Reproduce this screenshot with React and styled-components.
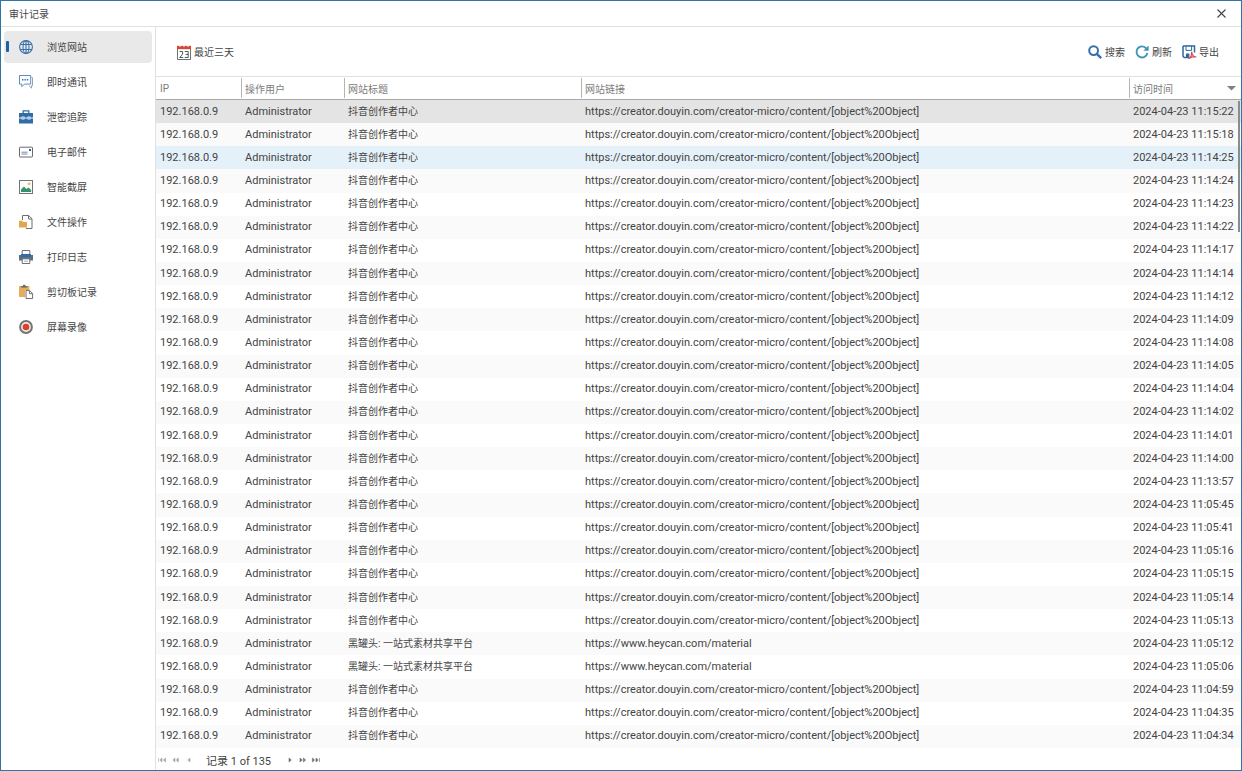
import React, { useState } from 'react';
import styled, { createGlobalStyle } from 'styled-components';

const GlobalStyle = createGlobalStyle`
  * {
    box-sizing: border-box;
  }
  body {
    margin: 0;
    background: #fff;
    color: #444;
    font-family: Roboto, 'Noto Sans CJK SC', sans-serif;
    font-size: 11px;
  }
  button {
    padding: 0;
    border: none;
    background: none;
    color: inherit;
    font: inherit;
    cursor: pointer;
  }
`;

const Window = styled.div`
  display: flex;
  flex-direction: column;
  height: 100vh;
  border: 1px solid #2e75a8;
  overflow: hidden;
`;

const TitleBar = styled.header`
  display: flex;
  align-items: center;
  justify-content: space-between;
  flex: none;
  height: 26px;
  padding: 0 14px 0 8px;
  border-bottom: 1px solid #e1e1e1;
`;

const Title = styled.h1`
  margin: 0;
  font-size: 10px;
  font-weight: 400;
`;

const CloseButton = styled.button`
  display: flex;
`;

const Body = styled.div`
  display: flex;
  flex: 1;
  min-height: 0;
`;

const Sidebar = styled.nav`
  display: flex;
  flex-direction: column;
  gap: 3px;
  flex: none;
  width: 155px;
  padding: 4px 3px;
  border-right: 1px solid #e1e1e1;
`;

const NavItem = styled.button`
  display: flex;
  align-items: center;
  height: 32px;
  padding-bottom: 1px;
  border-radius: 4px;
  background: ${(props) => (props.$active ? '#e9e9e9' : 'transparent')};
  font-size: 10px;

  &::before {
    content: '';
    width: 3px;
    height: 11px;
    margin: 0 9px 0 2px;
    border-radius: 1px;
    background: ${(props) => (props.$active ? '#1b62a5' : 'transparent')};
  }

  svg {
    margin-right: 13px;
  }
`;

const Main = styled.main`
  display: flex;
  flex-direction: column;
  flex: 1;
  min-width: 0;
`;

const Toolbar = styled.div`
  display: flex;
  align-items: center;
  justify-content: space-between;
  flex: none;
  height: 50px;
  padding: 0 22px 0 20px;
  border-bottom: 1px solid #e1e1e1;
`;

const ToolGroup = styled.div`
  display: flex;
  gap: 9px;
`;

const ToolButton = styled.button`
  display: flex;
  align-items: center;
  gap: 2px;
  font-size: 10px;
`;

const GridArea = styled.div`
  position: relative;
  flex: 1;
  min-height: 0;
  overflow: hidden;
`;

const Table = styled.table`
  width: 100%;
  height: 100%;
  table-layout: fixed;
  border-collapse: separate;
  border-spacing: 0;
`;

const HeadCell = styled.th`
  width: ${(props) => props.$width};
  height: 23px;
  padding: 0;
  border-bottom: 1px solid #a8a8a8;
  color: #7c7c7c;
  font-size: 10px;
  font-weight: 400;
  text-align: left;
`;

const HeadInner = styled.div`
  display: flex;
  align-items: center;
  justify-content: space-between;
  height: 20px;
  padding: 0 5px 0 3px;
  border-left: 1px solid ${(props) => (props.$first ? 'transparent' : '#b4b4b4')};
`;

const Row = styled.tr`
  background: ${(props) => (props.$odd ? '#fafafa' : '#fff')};
  ${(props) => props.$hot && 'background: #e5f1f9;'}
  ${(props) => props.$selected && 'background: #e4e4e4;'}
`;

const Cell = styled.td`
  padding: 0 0 0 4px;
  font-size: ${(props) => (props.$small ? '10px' : '11px')};
  line-height: 20px;
  white-space: nowrap;
  overflow: hidden;
`;

const ScrollThumb = styled.div`
  position: absolute;
  top: 24px;
  right: 1px;
  width: 2px;
  height: 131px;
  background: #8c8c8c;
`;

const Pager = styled.footer`
  display: flex;
  align-items: center;
  flex: none;
  height: 22px;
  padding: 2px 1px 0;
`;

const PagerText = styled.span`
  margin: 0 14px 0 13px;
`;

const PagerButtons = styled.div`
  display: flex;
  gap: 3px;
`;

const PagerButton = styled.button`
  display: flex;
`;

const Icon = ({ children, size = 16 }) => (
  <svg width={size} height={size} viewBox="0 0 16 16" fill="none" aria-hidden="true">
    {children}
  </svg>
);

const GlobeIcon = () => (
  <Icon>
    <g stroke="#3a70a8" strokeWidth="1.1">
      <circle cx="8" cy="8" r="6.4" />
      <ellipse cx="8" cy="8" rx="3" ry="6.4" />
      <path d="M8 1.6v12.8M2.4 5.5h11.2M2.4 10.5h11.2" />
    </g>
  </Icon>
);

const ChatIcon = () => (
  <Icon>
    <path d="M13.4 3.5h1.1v8.2h-1v2.4l-2.4-2.2" stroke="#9aa3ad" />
    <path d="M1.5 1.5h11.2v8.6H6.4l-2.6 2.6v-2.6H1.5z" fill="#fff" stroke="#5b8fc4" />
    <path d="M4 5h1.4v1.4H4zM6.4 5h1.4v1.4H6.4zM8.8 5h1.4v1.4H8.8z" fill="#3a70a8" />
  </Icon>
);

const BriefcaseIcon = () => (
  <Icon>
    <path d="M5.2 4V1.8h5.6V4" stroke="#2f6ca8" strokeWidth="1.3" />
    <path d="M1 4h14v10.5H1z" fill="#2f6ca8" />
    <path d="M1 9h14" stroke="#fff" strokeWidth=".9" />
    <path d="M3.5 7.5h3v3h-3zM9.5 7.5h3v3h-3z" fill="#e3edf6" />
    <path d="M4.5 8.5h1v1h-1zM10.5 8.5h1v1h-1z" fill="#2f6ca8" />
  </Icon>
);

const MailIcon = () => (
  <Icon>
    <rect x="1.5" y="3.2" width="13" height="9.8" rx=".6" stroke="#6a6a6a" />
    <path d="M3.5 8.2h6M3.5 10h6" stroke="#6f8fb8" />
    <path d="M11 5h2v2h-2z" fill="#3a5f94" />
  </Icon>
);

const ImageIcon = () => (
  <Icon>
    <rect x="1.5" y="1.5" width="13" height="13" stroke="#737373" />
    <path d="M3 13v-2.4l3-3.2 2.4 2.6 2-1.6 2.8 2.6v2z" fill="#35936c" />
    <circle cx="11.2" cy="4.8" r="1.4" fill="#e9b968" />
  </Icon>
);

const FileIcon = () => (
  <Icon>
    <path d="M4.5 6V1.5h6.2l3.3 3.3v9.7H8" stroke="#6f6f6f" />
    <path d="M10.5 1.5V5H14" stroke="#6f6f6f" />
    <path d="M1 6.8h3.2l1 1.2H9v5.5H1z" fill="#e2a650" />
  </Icon>
);

const PrinterIcon = () => (
  <Icon>
    <path d="M4.2 5.5v-4h7.6v4" stroke="#6f6f6f" />
    <path d="M3 5h10v3H3z" fill="#2f6ca8" />
    <path d="M1 6h2v2h10V6h2v5.6H1z" fill="#5c6e82" />
    <path d="M4.2 9.8h7.6v4.7H4.2z" fill="#fff" stroke="#6f6f6f" />
    <path d="M6 12.2h4" stroke="#8fb3d6" />
  </Icon>
);

const ClipboardIcon = () => (
  <Icon>
    <path d="M1 2h10.4v4.5H7V13H1z" fill="#e6ae5c" />
    <path d="M3.2 2h6v1.6h-6z" fill="#6b6b6b" />
    <path d="M5 .8h2.4V2H5z" fill="#6b6b6b" />
    <path d="M8 6.5h3.6l3 3v5H8z" fill="#fff" stroke="#6f6f6f" />
    <path d="M11.4 6.8v2.9h3" stroke="#6f6f6f" />
  </Icon>
);

const RecordIcon = () => (
  <Icon>
    <circle cx="8" cy="8" r="5.9" fill="#f3e9e7" stroke="#747474" strokeWidth="2" />
    <circle cx="8" cy="8" r="3.3" fill="#d8402f" />
  </Icon>
);

const CalendarIcon = () => (
  <Icon>
    <path d="M1.5 3.5h13v12h-13z" fill="#fff" stroke="#707070" />
    <path d="M1 1.8h14v3.4H1z" fill="#cf4a3c" />
    <path d="M4 .8v2.2M8 .8v2.2M12 .8v2.2" stroke="#fff" />
    <path d="M3.6 7.5h3v2.6l-2.8 3.4h3.4M8.8 7.5h3.4v6H8.8M9.6 10.4h2.6" stroke="#4c5a5a" />
  </Icon>
);

const SearchIcon = () => (
  <Icon>
    <circle cx="6.6" cy="6.6" r="4.4" stroke="#3271ae" strokeWidth="2" />
    <path d="M9.8 9.8l4.4 4.4" stroke="#3271ae" strokeWidth="2.4" />
  </Icon>
);

const RefreshIcon = () => (
  <Icon>
    <path d="M12.4 4.6A5.5 5.5 0 1 0 13.4 9" stroke="#3f95b6" strokeWidth="1.9" />
    <path d="M14.6 1.6v5.2H9.4z" fill="#3f95b6" />
  </Icon>
);

const ExportIcon = () => (
  <Icon>
    <path d="M2 2h11.5v6.5M8 13.5H3.2L2 12.3V2" stroke="#2f68a3" strokeWidth="1.5" />
    <path d="M5 2.2h5.6v4.2H5z" fill="#fff" stroke="#2f68a3" />
    <path d="M5 9.5h3.4v4H5z" fill="#2f68a3" />
    <path d="M7.6 14.8c2-.9 3.2-3.6 3-7 .5 3.4 2 5.2 4.6 5.2-2.6-.8-5.4.3-7.6 1.8z" fill="#fff" stroke="#d5434a" strokeWidth="1.2" />
  </Icon>
);

const CloseIcon = () => (
  <svg width="11" height="11" viewBox="0 0 11 11" aria-hidden="true">
    <path d="M1.5 1.5l8 8M9.5 1.5l-8 8" stroke="#444" strokeWidth="1.1" />
  </svg>
);

const SortArrow = () => (
  <svg width="9" height="5" viewBox="0 0 9 5" aria-hidden="true">
    <path d="M0 0h9L4.5 4.6z" fill="#808080" />
  </svg>
);

const pagerPaths = {
  first: 'M1.5 3v4M5 3v4L2.8 5zM8.6 3v4L6.4 5z',
  prevPage: 'M5 3v4L2.8 5zM8.4 3v4L6.2 5z',
  prev: 'M7 3v4L4.8 5z',
  next: 'M4 3v4l2.2-2z',
  nextPage: 'M2 3v4l2.2-2zM5.4 3v4l2.2-2z',
  last: 'M1.4 3v4l2.2-2zM5 3v4l2.2-2zM8.5 3v4',
};

const PagerIcon = ({ name, color }) => (
  <svg width="10" height="10" viewBox="0 0 10 10" aria-hidden="true">
    <path d={pagerPaths[name]} fill={color} stroke={color} strokeWidth=".6" />
  </svg>
);

const navItems = [
  { label: '浏览网站', icon: GlobeIcon },
  { label: '即时通讯', icon: ChatIcon },
  { label: '泄密追踪', icon: BriefcaseIcon },
  { label: '电子邮件', icon: MailIcon },
  { label: '智能截屏', icon: ImageIcon },
  { label: '文件操作', icon: FileIcon },
  { label: '打印日志', icon: PrinterIcon },
  { label: '剪切板记录', icon: ClipboardIcon },
  { label: '屏幕录像', icon: RecordIcon },
];

const columns = [
  { label: 'IP', width: '85px' },
  { label: '操作用户', width: '103px' },
  { label: '网站标题', width: '237px' },
  { label: '网站链接', width: 'auto' },
  { label: '访问时间', width: '112px' },
];

const times = [
  '11:15:22', '11:15:18', '11:14:25', '11:14:24', '11:14:23', '11:14:22', '11:14:17',
  '11:14:14', '11:14:12', '11:14:09', '11:14:08', '11:14:05', '11:14:04', '11:14:02',
  '11:14:01', '11:14:00', '11:13:57', '11:05:45', '11:05:41', '11:05:16', '11:05:15',
  '11:05:14', '11:05:13', '11:05:12', '11:05:06', '11:04:59', '11:04:35', '11:04:34',
];

const douyin = {
  title: '抖音创作者中心',
  url: 'https://creator.douyin.com/creator-micro/content/[object%20Object]',
};
const heycan = {
  title: '黑罐头: 一站式素材共享平台',
  url: 'https://www.heycan.com/material',
};

const records = times.map((time) => ({
  ip: '192.168.0.9',
  user: 'Administrator',
  time: `2024-04-23 ${time}`,
  ...(time === '11:05:12' || time === '11:05:06' ? heycan : douyin),
}));

export default function App() {
  const [active, setActive] = useState(0);
  const [selected, setSelected] = useState(0);

  return (
    <Window>
      <GlobalStyle />
      <TitleBar>
        <Title>审计记录</Title>
        <CloseButton aria-label="关闭"><CloseIcon /></CloseButton>
      </TitleBar>
      <Body>
        <Sidebar>
          {navItems.map(({ label, icon: NavIcon }, i) => (
            <NavItem key={label} $active={i === active} onClick={() => setActive(i)}>
              <NavIcon />
              {label}
            </NavItem>
          ))}
        </Sidebar>
        <Main>
          <Toolbar>
            <ToolButton><CalendarIcon />最近三天</ToolButton>
            <ToolGroup>
              <ToolButton><SearchIcon />搜索</ToolButton>
              <ToolButton><RefreshIcon />刷新</ToolButton>
              <ToolButton><ExportIcon />导出</ToolButton>
            </ToolGroup>
          </Toolbar>
          <GridArea>
            <Table>
              <thead>
                <tr>
                  {columns.map((col, i) => (
                    <HeadCell key={col.label} $width={col.width}>
                      <HeadInner $first={i === 0}>
                        {col.label}
                        {i === columns.length - 1 && <SortArrow />}
                      </HeadInner>
                    </HeadCell>
                  ))}
                </tr>
              </thead>
              <tbody>
                {records.map((r, i) => (
                  <Row
                    key={r.time}
                    $odd={i % 2 === 1}
                    $hot={i === 2}
                    $selected={i === selected}
                    onClick={() => setSelected(i)}
                  >
                    <Cell>{r.ip}</Cell>
                    <Cell>{r.user}</Cell>
                    <Cell $small>{r.title}</Cell>
                    <Cell>{r.url}</Cell>
                    <Cell>{r.time}</Cell>
                  </Row>
                ))}
              </tbody>
            </Table>
            <ScrollThumb />
          </GridArea>
          <Pager>
            <PagerButtons>
              <PagerButton aria-label="第一条"><PagerIcon name="first" color="#a8a8a8" /></PagerButton>
              <PagerButton aria-label="上一页"><PagerIcon name="prevPage" color="#a8a8a8" /></PagerButton>
              <PagerButton aria-label="上一条"><PagerIcon name="prev" color="#a8a8a8" /></PagerButton>
            </PagerButtons>
            <PagerText>记录 1 of 135</PagerText>
            <PagerButtons>
              <PagerButton aria-label="下一条"><PagerIcon name="next" color="#6e6e6e" /></PagerButton>
              <PagerButton aria-label="下一页"><PagerIcon name="nextPage" color="#6e6e6e" /></PagerButton>
              <PagerButton aria-label="最后一条"><PagerIcon name="last" color="#6e6e6e" /></PagerButton>
            </PagerButtons>
          </Pager>
        </Main>
      </Body>
    </Window>
  );
}
